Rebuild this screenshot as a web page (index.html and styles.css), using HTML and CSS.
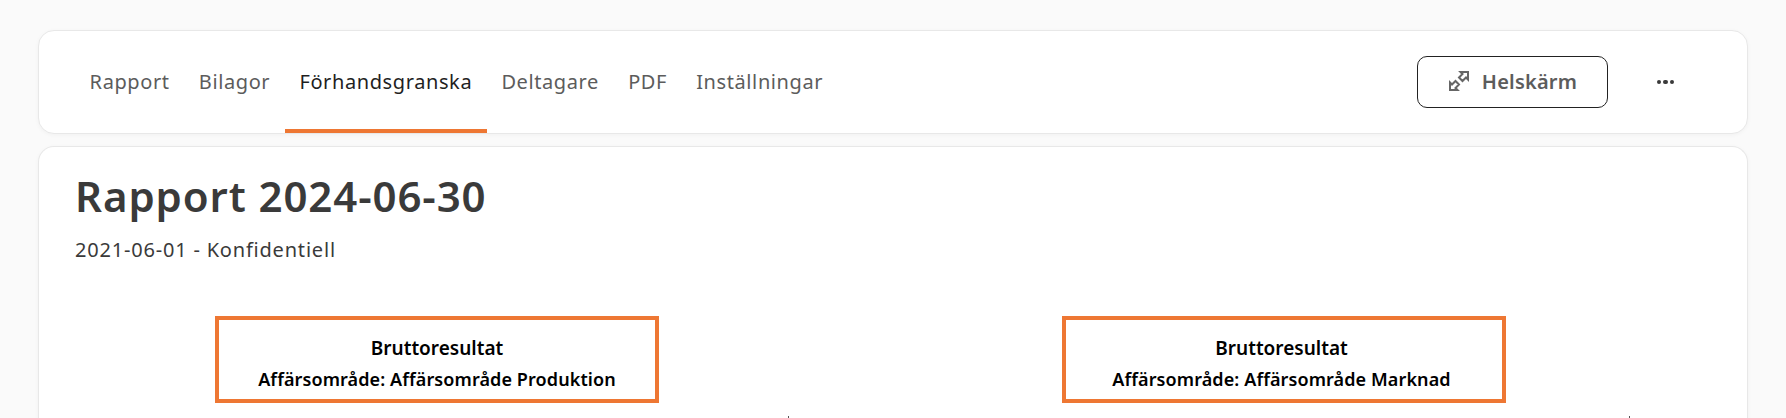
FILE: index.html
```html
<!DOCTYPE html>
<html lang="sv">
<head>
<meta charset="utf-8">
<title>Rapport 2024-06-30</title>
<link rel="stylesheet" href="styles.css">
</head>
<body>
<header class="card nav">
  <nav class="tabs">
    <a class="tab">Rapport</a>
    <a class="tab">Bilagor</a>
    <a class="tab active">Förhandsgranska</a>
    <a class="tab">Deltagare</a>
    <a class="tab">PDF</a>
    <a class="tab">Inställningar</a>
  </nav>
  <div class="actions">
    <button class="fullscreen">
      <svg class="fs-icon" width="22" height="22" viewBox="0 0 22 22" fill="none" stroke="#666" stroke-width="2" stroke-linejoin="miter">
        <path d="M2 12.500V20H9.500L7.500 18L11 14.500L7.500 11L4 14.500Z"/>
        <path d="M20 9.500V2H12.500L14.500 4L11 7.500L14.500 11L18 7.500Z"/>
      </svg>
      <span>Helskärm</span>
    </button>
    <div class="dots"><i></i><i></i><i></i></div>
  </div>
</header>
<main class="card report">
  <h1 class="title">Rapport 2024-06-30</h1>
  <p class="subtitle">2021-06-01 - Konfidentiell</p>
  <div class="charts">
    <section class="chart">
      <div class="chart-box">
        <div class="chart-title">Bruttoresultat</div>
        <div class="chart-sub">Affärsområde: Affärsområde Produktion</div>
      </div>
      <div class="tick"></div>
    </section>
    <section class="chart">
      <div class="chart-box">
        <div class="chart-title">Bruttoresultat</div>
        <div class="chart-sub">Affärsområde: Affärsområde Marknad</div>
      </div>
      <div class="tick"></div>
    </section>
  </div>
</main>
</body>
</html>
```

FILE: styles.css
```css
* { box-sizing: border-box; }
html, body { margin: 0; height: 418px; overflow: hidden; }
body {
  background: #fafafa;
  padding: 30px 38px 0;
  font-family: "Noto Sans", Lato, sans-serif;
  color: #333;
}
.card {
  background: #fff;
  border: 1px solid #e8e8e8;
  border-radius: 16px;
  box-shadow: 0 1px 4px rgba(0, 0, 0, 0.04);
}
.nav {
  height: 104px;
  display: flex;
  justify-content: space-between;
  align-items: stretch;
  padding: 0 73px 0 36px;
}
.tabs { display: flex; }
.tab {
  display: flex;
  align-items: center;
  padding: 2px 14.600px 0;
  font-size: 20px;
  letter-spacing: 0.6px;
  color: #5c5c5c;
  border-bottom: 4px solid transparent;
}
.tab.active {
  color: #1f1f1f;
  border-bottom-color: #ee7733;
}
.actions { display: flex; align-items: center; gap: 49px; }
.fullscreen {
  width: 191px;
  height: 52px;
  padding: 0 0 2px;
  background: #fff;
  border: 1px solid #222;
  border-radius: 10px;
  display: flex;
  align-items: center;
  justify-content: center;
  gap: 12px;
  font: 600 20px "Noto Sans", sans-serif;
  letter-spacing: 0.2px;
  color: #5c5c5c;
}
.fs-icon { flex: none; }
.dots { display: flex; gap: 2px; width: 17px; }
.dots i { width: 4.500px; height: 4.500px; border-radius: 50%; background: #3a3a3a; }
.report {
  margin-top: 12px;
  height: 320px;
  padding: 26px 36px 0;
  overflow: hidden;
  border-bottom: 0;
  border-radius: 16px 16px 0 0;
}
.title {
  margin: 0;
  font-size: 42px;
  line-height: 46px;
  font-weight: 600;
  letter-spacing: 0.9px;
  color: #3a3a3a;
}
.subtitle {
  margin: 18px 0 0;
  font-size: 20px;
  line-height: 26px;
  letter-spacing: 0.8px;
  color: #3a3a3a;
}
.charts {
  margin-top: 53px;
  display: grid;
  grid-template-columns: 724px 724px;
  column-gap: 123px;
}
.chart { display: flex; flex-direction: column; align-items: center; position: relative; }
.chart-box {
  width: 444px;
  height: 87px;
  border: 4px solid #ee7733;
  padding-top: 7px;
  display: flex;
  flex-direction: column;
  align-items: center;
  justify-content: center;
  gap: 8px;
  color: #000;
  font-weight: 600;
}
.chart:last-child .chart-box { padding-right: 5px; }
.chart-title { font-size: 19px; line-height: 24px; }
.chart-sub { font-size: 18px; line-height: 22px; letter-spacing: 0.1px; }
.tick {
  position: absolute;
  top: 100px;
  right: 10px;
  width: 1px;
  height: 2px;
  background: #555;
}
.chart:last-child .tick { right: 16px; }
```
